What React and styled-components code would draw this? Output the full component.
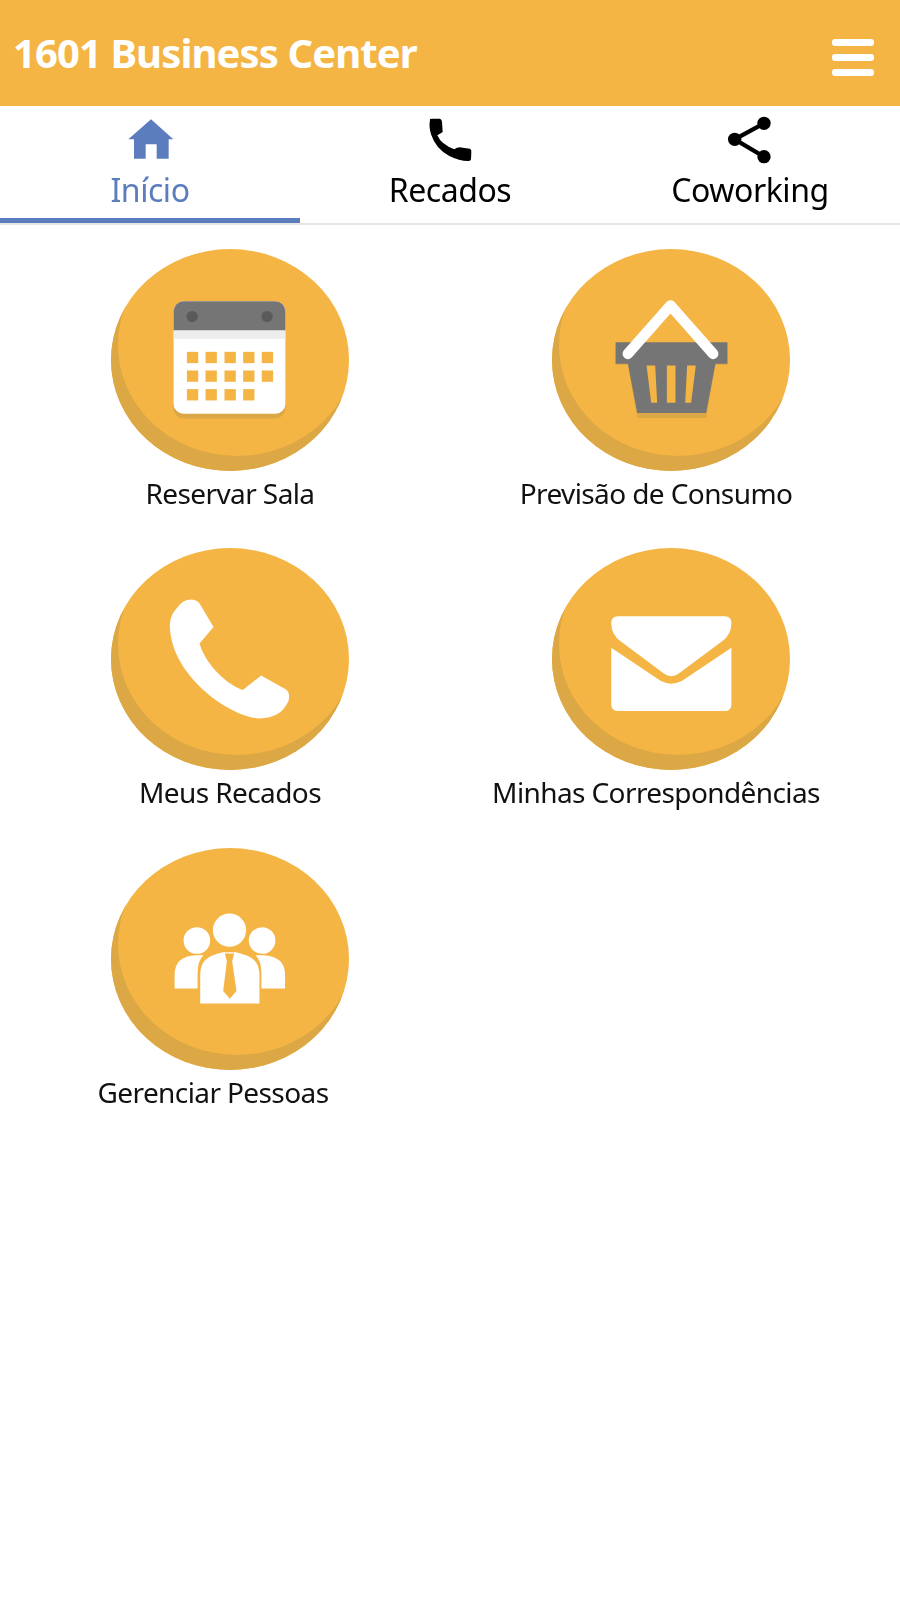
import React from "react";
import styled, { createGlobalStyle } from "styled-components";

const ORANGE = "#F4B545";
const SHADE = "#DCA745";
const FONT = `"Noto Sans", "Open Sans", sans-serif`;

const Global = createGlobalStyle`
  html, body { margin: 0; padding: 0; background: #fff; }
  body { font-family: ${FONT}; width: 900px; min-height: 1598px; overflow: hidden; }
`;

const Page = styled.div`
  width: 900px;
  min-height: 1598px;
  display: flex;
  flex-direction: column;
  filter: blur(0.5px);
`;

const Header = styled.header`
  height: 106px;
  background: ${ORANGE};
  display: flex;
  align-items: center;
  justify-content: space-between;
  padding: 0 26px 0 13px;
  box-sizing: border-box;
`;

const Title = styled.h1`
  margin: 0;
  color: #fff;
  font-size: 40px;
  font-weight: 700;
  letter-spacing: -0.9px;
  line-height: 1;
`;

const Burger = styled.div`
  width: 42px;
  height: 37px;
  margin-top: 8px;
  display: flex;
  flex-direction: column;
  justify-content: space-between;
`;

const BurgerBar = styled.span`
  display: block;
  height: 7px;
  border-radius: 3px;
  background: #fff;
`;

const TabBar = styled.nav`
  height: 119px;
  display: grid;
  grid-template-columns: repeat(3, 1fr);
  border-bottom: 2px solid #e6e6e6;
  box-sizing: border-box;
`;

const Tab = styled.div`
  display: flex;
  flex-direction: column;
  align-items: center;
  padding-top: 10px;
  box-sizing: border-box;
  height: 117px;
  color: ${(p) => (p.$active ? "#5B7DBE" : "#000")};
  border-bottom: 5px solid ${(p) => (p.$active ? "#5B7DBE" : "transparent")};
`;

const TabLabel = styled.span`
  font-size: 32px;
  line-height: 40px;
  letter-spacing: -0.45px;
  margin-top: 4px;
`;

const Grid = styled.main`
  display: grid;
  grid-template-columns: 460px 422px;
  grid-auto-rows: 299.5px;
  padding-top: 23.5px;
`;

const Tile = styled.div`
  display: flex;
  flex-direction: column;
  align-items: center;
`;

const Disc = styled.div`
  width: 238px;
  height: 222px;
  border-radius: 50%;
  background: ${ORANGE};
  box-shadow: inset 7px -15px 0 ${SHADE};
  display: flex;
`;

const TileLabel = styled.span`
  font-size: 28px;
  line-height: 36px;
  letter-spacing: -0.6px;
  color: #111;
  white-space: nowrap;
  margin-top: 4px;
  margin-right: ${(p) => p.$shift || 0}px;
`;

const Art = ({ children }) => (
  <svg width="238" height="222" viewBox="65 25 713 667">{children}</svg>
);

const Calendar = () => (
  <Art>
    <rect x="252" y="192" width="336" height="342" rx="30" fill={SHADE} />
    <rect x="252" y="182" width="336" height="338" rx="30" fill="#fff" />
    <path d="M252 270V212a30 30 0 0 1 30-30h276a30 30 0 0 1 30 30v58z" fill="#757575" />
    <rect x="252" y="270" width="336" height="25" fill="#ededed" />
    <circle cx="308" cy="228" r="17" fill="#5a5a5a" />
    <circle cx="533" cy="228" r="17" fill="#5a5a5a" />
    {[334, 390, 446].flatMap((y, r) =>
      [292, 348, 405, 461, 517]
        .slice(0, r === 2 ? 4 : 5)
        .map((x) => <rect key={`${x}-${y}`} x={x} y={y} width="34" height="34" fill={ORANGE} />)
    )}
  </Art>
);

const Basket = () => (
  <Art>
    <path d="M255 317h336v56h-36l-28 160H320l-28-160h-37z" fill={SHADE} />
    <path d="M255 305h336v65h-36l-28 148H320l-28-148h-37z" fill="#757575" />
    <path d="M348 375h26l6 112h-18zM409 375h26v112h-26zM470 375h26l-14 112h-18z" fill={ORANGE} />
    <path d="M292 340L420 195L548 340" fill="none" stroke="#fff" strokeWidth="32" strokeLinecap="round" strokeLinejoin="round" />
  </Art>
);

const Handset = () => (
  <Art>
    <path
      d="M262 205Q280 180 305 180Q325 182 332 195L372 262L330 312C345 365 400 430 460 452L515 408L590 450Q604 462 597 485Q575 537 510 537C420 532 248 410 241 265Q238 230 262 205Z"
      fill="#fff"
    />
  </Art>
);

const Envelope = () => (
  <Art>
    <path d="M262 230H583Q603 230 603 250Q603 285 575 305L445 402Q422 418 400 402L270 305Q242 285 242 250Q242 230 262 230Z" fill="#fff" />
    <path d="M242 325L390 424Q422 441 455 424L603 325V495Q603 515 583 515H262Q242 515 242 495Z" fill="#fff" />
  </Art>
);

const People = () => (
  <Art>
    <circle cx="420" cy="272" r="50" fill="#fff" />
    <circle cx="322" cy="303" r="40" fill="#fff" />
    <circle cx="518" cy="303" r="40" fill="#fff" />
    <path d="M255 447V405Q255 350 320 347H342Q324 362 324 405V447Z" fill="#fff" />
    <path d="M587 447V405Q587 350 520 347H498Q516 362 516 405V447Z" fill="#fff" />
    <path d="M332 492V410C332 365 350 350 400 338H440C490 350 510 365 510 410V492Z" fill="#fff" />
    <path d="M406 342H434L428 365L441 455L421 478L401 455L412 365Z" fill={ORANGE} />
  </Art>
);

const TabIcon = ({ x, children }) => (
  <svg width="60" height="50" viewBox={`${x} 30 180 150`} fill="currentColor">{children}</svg>
);

const HomeIcon = () => (
  <TabIcon x={30}>
    <path d="M123 40L190 100H176V158H140V115H107V158H72V100H55Z" />
  </TabIcon>
);

const CallIcon = () => (
  <TabIcon x={62}>
    <path d="M92 42Q90 38 98 38H122Q128 40 128 48L130 78Q122 84 114 88Q125 115 165 130Q170 125 180 124L212 128Q217 130 216 138L215 160Q214 166 206 165Q180 165 150 150Q110 130 95 85Q88 60 92 42Z" />
  </TabIcon>
);

const ShareIcon = () => (
  <TabIcon x={60}>
    <path d="M192 52L104 100L192 152" fill="none" stroke="currentColor" strokeWidth="13" />
    <circle cx="192" cy="52" r="20" />
    <circle cx="104" cy="100" r="20" />
    <circle cx="192" cy="152" r="20" />
  </TabIcon>
);

export default function App() {
  return (
    <Page>
      <Global />
      <Header>
        <Title>1601 Business Center</Title>
        <Burger>
          <BurgerBar />
          <BurgerBar />
          <BurgerBar />
        </Burger>
      </Header>
      <TabBar>
        <Tab $active>
          <HomeIcon />
          <TabLabel>Início</TabLabel>
        </Tab>
        <Tab>
          <CallIcon />
          <TabLabel>Recados</TabLabel>
        </Tab>
        <Tab>
          <ShareIcon />
          <TabLabel>Coworking</TabLabel>
        </Tab>
      </TabBar>
      <Grid>
        <Tile>
          <Disc><Calendar /></Disc>
          <TileLabel>Reservar Sala</TileLabel>
        </Tile>
        <Tile>
          <Disc><Basket /></Disc>
          <TileLabel $shift={30}>Previsão de Consumo</TileLabel>
        </Tile>
        <Tile>
          <Disc><Handset /></Disc>
          <TileLabel>Meus Recados</TileLabel>
        </Tile>
        <Tile>
          <Disc><Envelope /></Disc>
          <TileLabel $shift={30}>Minhas Correspondências</TileLabel>
        </Tile>
        <Tile>
          <Disc><People /></Disc>
          <TileLabel $shift={34}>Gerenciar Pessoas</TileLabel>
        </Tile>
      </Grid>
    </Page>
  );
}
